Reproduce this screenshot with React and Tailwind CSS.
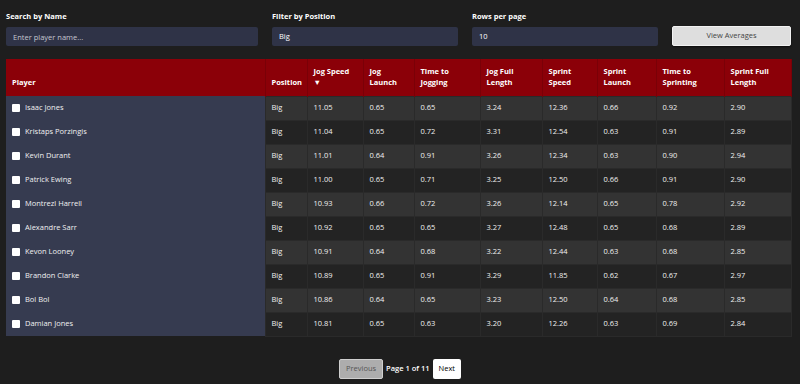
import React, { useState } from "react";

const players = [
  ["Isaac Jones", "11.05", "0.65", "0.65", "3.24", "12.36", "0.66", "0.92", "2.90"],
  ["Kristaps Porzingis", "11.04", "0.65", "0.72", "3.31", "12.54", "0.63", "0.91", "2.89"],
  ["Kevin Durant", "11.01", "0.64", "0.91", "3.26", "12.34", "0.63", "0.90", "2.94"],
  ["Patrick Ewing", "11.00", "0.65", "0.71", "3.25", "12.50", "0.66", "0.91", "2.90"],
  ["Montrezl Harrell", "10.93", "0.66", "0.72", "3.26", "12.14", "0.65", "0.78", "2.92"],
  ["Alexandre Sarr", "10.92", "0.65", "0.65", "3.27", "12.48", "0.65", "0.68", "2.89"],
  ["Kevon Looney", "10.91", "0.64", "0.68", "3.22", "12.44", "0.63", "0.68", "2.85"],
  ["Brandon Clarke", "10.89", "0.65", "0.91", "3.29", "11.85", "0.62", "0.67", "2.97"],
  ["Bol Bol", "10.86", "0.64", "0.65", "3.23", "12.50", "0.64", "0.68", "2.85"],
  ["Damian Jones", "10.81", "0.65", "0.63", "3.20", "12.26", "0.63", "0.69", "2.84"],
];

const columns = [
  { label: "Position", w: "w-[42px]" },
  { label: "Jog Speed ▼", w: "w-[56px]" },
  { label: "Jog Launch", w: "w-[51px]" },
  { label: "Time to Jogging", w: "w-[66px]" },
  { label: "Jog Full Length", w: "w-[62px]" },
  { label: "Sprint Speed", w: "w-[55px]" },
  { label: "Sprint Launch", w: "w-[59px]" },
  { label: "Time to Sprinting", w: "w-[68px]" },
  { label: "Sprint Full Length", w: "w-[67px]" },
];

export default function App() {
  const [search, setSearch] = useState("");

  return (
    <div
      className="w-[800px] h-[384px] bg-[#1e1e1e] text-white px-[6px] pt-[11px] overflow-hidden"
      style={{ fontFamily: "'Open Sans', 'Noto Sans', sans-serif" }}
    >
      {/* filters */}
      <div className="flex gap-[14px] items-end">
        <div className="w-[252px]">
          <div className="text-[7.5px] font-bold leading-[11px] mb-[5px]">Search by Name</div>
          <input
            value={search}
            onChange={(e) => setSearch(e.target.value)}
            placeholder="Enter player name..."
            className="block w-full h-[19px] bg-[#2f3347] rounded-[2px] px-[7px] text-[7.5px] text-white placeholder:text-[#c4c6d0] outline-none"
          />
        </div>
        <div className="w-[186px]">
          <div className="text-[7.5px] font-bold leading-[11px] mb-[5px]">Filter by Position</div>
          <div className="h-[19px] bg-[#2f3347] rounded-[2px] px-[7px] text-[7.5px] flex items-center">Big</div>
        </div>
        <div className="w-[186px]">
          <div className="text-[7.5px] font-bold leading-[11px] mb-[5px]">Rows per page</div>
          <div className="h-[19px] bg-[#2f3347] rounded-[2px] px-[7px] text-[7.5px] flex items-center">10</div>
        </div>
        <button className="w-[119px] h-[20px] bg-[#dedede] border border-[#f2f2f2] rounded-[2px] text-[7.5px] text-[#444] shadow-[0_1px_2px_rgba(0,0,0,0.6)]">
          View Averages
        </button>
      </div>

      {/* table */}
      <table className="mt-[13px] w-[785px] table-fixed border-collapse text-[7.5px] text-[#f0f0f0]">
        <thead>
          <tr className="bg-[#8b0008] h-[37px] text-white">
            <th className="w-[259px] text-left align-bottom font-bold px-[6px] pb-[8px] leading-[11px] border-r border-[#7a0007]">
              Player
            </th>
            {columns.map((c) => (
              <th
                key={c.label}
                className={`${c.w} text-left align-bottom font-bold px-[6px] pb-[8px] leading-[11px] border-r border-[#7a0007]`}
              >
                {c.label}
              </th>
            ))}
          </tr>
        </thead>
        <tbody>
          {players.map((p, i) => (
            <tr key={p[0]} className={`h-[24px] ${i % 2 === 0 ? "bg-[#333333]" : "bg-[#232323]"}`}>
              <td className="bg-[#363b50] px-[6px]">
                <div className="flex items-center gap-[5px]">
                  <span className="w-[8px] h-[8px] bg-white rounded-[1px] inline-block" />
                  <span>{p[0]}</span>
                </div>
              </td>
              <td className="px-[6px] border border-[#2a2a2a]">Big</td>
              {p.slice(1).map((v, j) => (
                <td key={j} className="px-[6px] border border-[#2a2a2a]">
                  {v}
                </td>
              ))}
            </tr>
          ))}
        </tbody>
      </table>

      {/* pagination */}
      <div className="flex justify-center items-center gap-[3px] mt-[22px] text-[7.5px]">
        <button className="h-[20px] px-[6px] bg-[#adadad] border border-[#cfcfcf] rounded-[2px] text-[#555]">
          Previous
        </button>
        <span className="font-semibold">Page 1 of 11</span>
        <button className="h-[20px] px-[6px] bg-white rounded-[2px] text-black">Next</button>
      </div>
    </div>
  );
}
